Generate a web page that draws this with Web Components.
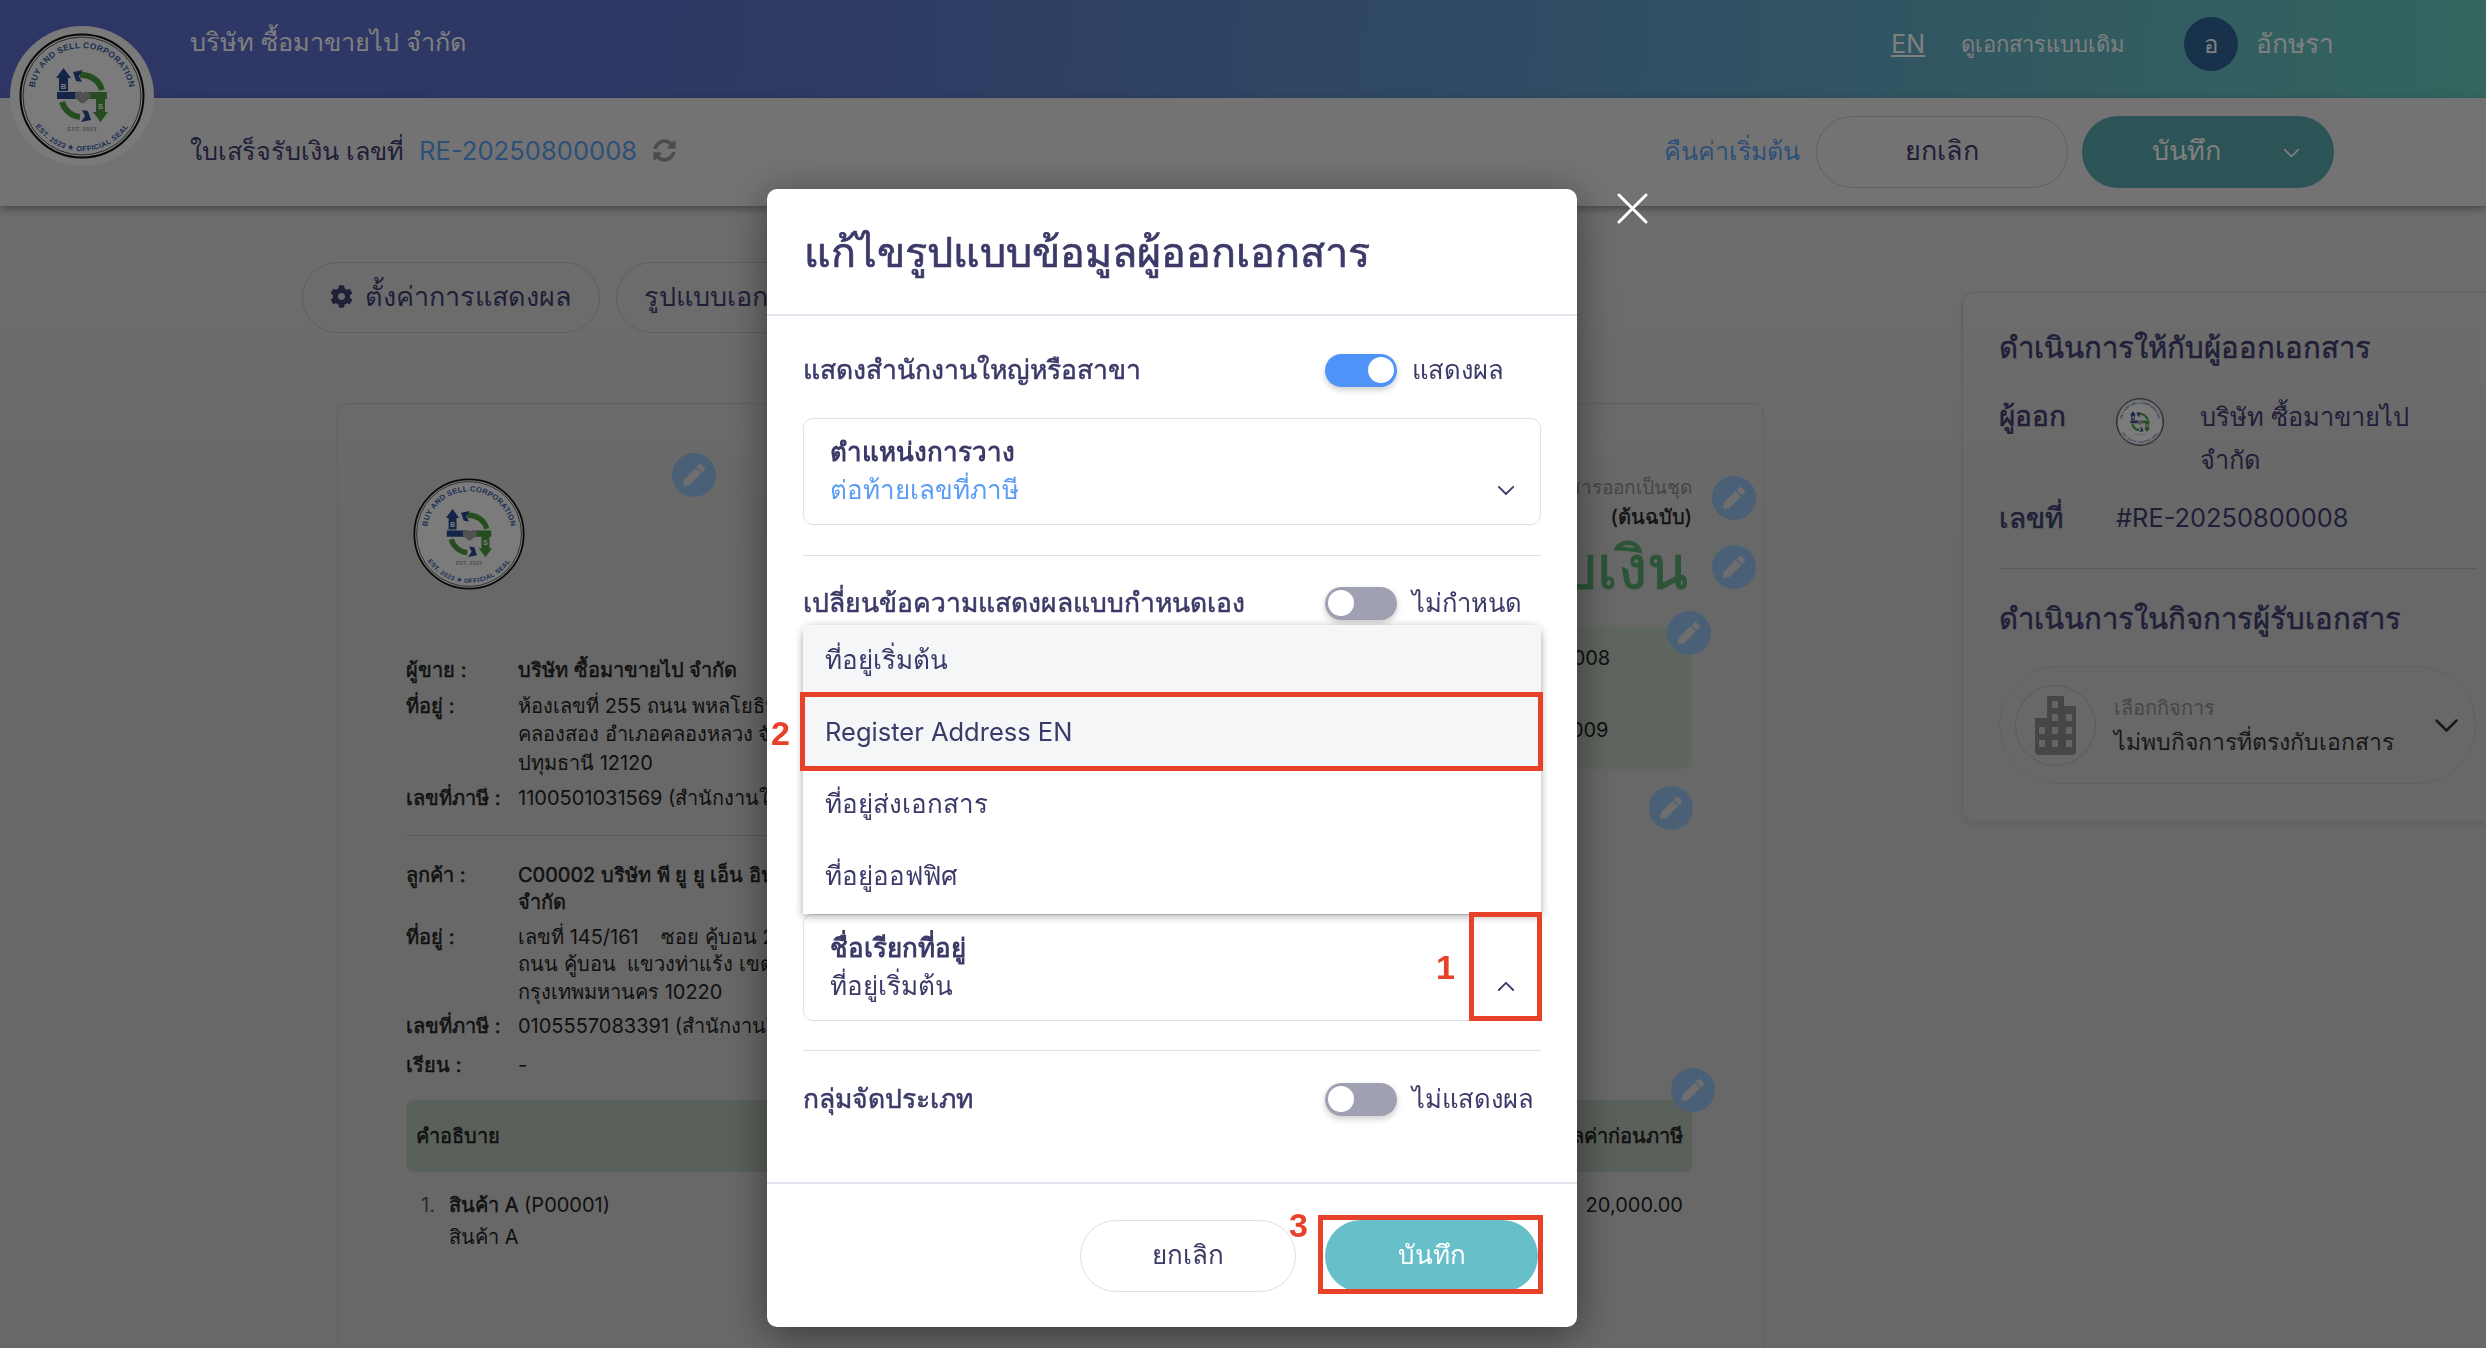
<!DOCTYPE html>
<html lang="th"><head><meta charset="utf-8"><title>แก้ไขรูปแบบข้อมูลผู้ออกเอกสาร</title>
<style>
html,body{margin:0;padding:0;width:2486px;height:1348px;overflow:hidden;background:#d2d2d2}
body{font-family:Inter,"Noto Sans","Open Sans",sans-serif;color:#2a2a2a}
</style></head><body>
<x-app></x-app>
<script>
function def(name,css,html){customElements.define(name,class extends HTMLElement{constructor(){super();this.attachShadow({mode:'open'}).innerHTML='<style>:host{display:block;box-sizing:border-box}*{box-sizing:border-box}'+css+'</style>'+html}})}
const ICON={
 gear:'<svg viewBox="0 0 512 512" width="23" height="23" fill="currentColor"><path d="M487.4 315.7l-42.6-24.6c4.3-23.2 4.3-47 0-70.2l42.6-24.6c4.9-2.8 7.1-8.6 5.5-14-11.1-35.6-30-67.8-54.7-94.6-3.8-4.1-10-5.1-14.8-2.3L380.8 110c-17.9-15.4-38.5-27.3-60.8-35.1V25.8c0-5.6-3.9-10.5-9.4-11.7-36.7-8.2-74.3-7.8-109.2 0-5.5 1.2-9.4 6.1-9.4 11.7V75c-22.2 7.9-42.8 19.8-60.8 35.1L88.7 85.5c-4.9-2.8-11-1.9-14.8 2.3-24.7 26.7-43.6 58.9-54.7 94.6-1.7 5.4.6 11.2 5.5 14L67.3 221c-4.3 23.2-4.3 47 0 70.2l-42.6 24.6c-4.9 2.8-7.1 8.6-5.5 14 11.1 35.6 30 67.8 54.7 94.6 3.8 4.1 10 5.1 14.8 2.3l42.6-24.6c17.9 15.4 38.5 27.3 60.8 35.1v49.2c0 5.6 3.9 10.5 9.4 11.7 36.7 8.2 74.3 7.8 109.2 0 5.5-1.2 9.4-6.1 9.4-11.7v-49.2c22.2-7.9 42.8-19.8 60.8-35.1l42.6 24.6c4.9 2.8 11 1.9 14.8-2.3 24.7-26.7 43.6-58.9 54.7-94.6 1.5-5.5-.7-11.3-5.6-14.1zM256 336c-44.1 0-80-35.9-80-80s35.9-80 80-80 80 35.9 80 80-35.9 80-80 80z"/></svg>',
 sync:'<svg viewBox="0 0 512 512" width="23" height="23" fill="currentColor"><path d="M370.72 133.28C339.458 104.008 298.888 87.962 255.848 88c-77.458.068-144.328 53.178-162.791 126.85-1.344 5.363-6.122 9.15-11.651 9.15H24.103c-7.498 0-13.194-6.807-11.807-14.176C33.933 94.924 134.813 8 256 8c66.448 0 126.791 26.136 171.315 68.685L463.03 40.97C478.149 25.851 504 36.559 504 57.941V192c0 13.255-10.745 24-24 24H345.941c-21.382 0-32.09-25.851-16.971-40.971l41.75-41.749zM32 296h134.059c21.382 0 32.09 25.851 16.971 40.971l-41.75 41.75c31.262 29.273 71.835 45.319 114.876 45.28 77.418-.07 144.315-53.144 162.787-126.849 1.344-5.363 6.122-9.15 11.651-9.15h57.304c7.498 0 13.194 6.807 11.807 14.176C478.067 417.076 377.187 504 256 504c-66.448 0-126.791-26.136-171.315-68.685L48.97 471.03C33.851 486.149 8 475.441 8 454.059V320c0-13.255 10.745-24 24-24z"/></svg>',
 down:s=>`<svg viewBox="0 0 20 12" width="${s}" height="${s*.6}" fill="none" stroke="currentColor" stroke-width="2" stroke-linecap="round" stroke-linejoin="round"><path d="M2 2l8 8 8-8"/></svg>`,
 up:s=>`<svg viewBox="0 0 20 12" width="${s}" height="${s*.6}" fill="none" stroke="currentColor" stroke-width="2" stroke-linecap="round" stroke-linejoin="round"><path d="M2 10l8-8 8 8"/></svg>`
};
/* seal logo: real text set on circular paths */
def('x-seal',`:host{display:block;width:var(--d,126px);height:var(--d,126px)}svg{display:block;width:100%;height:100%;font-family:"Liberation Sans",Arial,sans-serif}`,
`<svg viewBox="-63 -63 126 126">
<defs><path id="t" d="M-43.500 20.300A48 48 0 1 1 43.500 20.300"/><path id="b" d="M-54 14A56 56 0 0 0 54 14"/></defs>
<circle r="61.5" fill="#f6f6f6" stroke="#111" stroke-width="2"/><circle r="59" fill="none" stroke="#111" stroke-width=".7"/>
<text font-size="8.500" font-weight="700" fill="#3a5fa8" letter-spacing=".25"><textPath href="#t" startOffset="50%" text-anchor="middle">BUY AND SELL CORPORATION</textPath></text>
<text font-size="7.200" font-weight="700" fill="#3a5fa8" letter-spacing=".5"><textPath href="#b" startOffset="50%" text-anchor="middle">EST. 2023 ★ OFFICIAL SEAL</textPath></text>
<text y="35" text-anchor="middle" font-size="5.600" font-weight="700" fill="#9a9a9a" letter-spacing=".4">EST. 2023</text>
<g fill="none" stroke="#4d9a3e" stroke-width="6"><path d="M-2-21A21 21 0 0 1 20-6"/><path d="M-20 6A21 21 0 0 0 -2 21"/></g>
<path fill="#2a4a90" d="M-18.500-28L-11-18H-14V-5H-23V-18H-26zM-25-4H-4V3H-25zM-9-24L1-26-3-20 0-14-6-15zM9 24L-1 26 3 20 0 14 6 15z"/>
<path fill="#4d9a3e" d="M18.500 26L11 16H14V3H23V16H26zM4-4H25V3H4z"/>
<text x="-18.500" y="-7.500" text-anchor="middle" font-size="7.400" font-weight="700" fill="#fff">B</text>
<text x="18.500" y="12.500" text-anchor="middle" font-size="7.400" font-weight="700" fill="#fff">S</text>
<path fill="#a2a2a2" d="M-7-3Q-2-6 1-3 5-6 9-2L8 2 2 7Q-1 8-3 5L-7 2z"/></svg>`);
def('x-pencil',`:host{position:absolute;width:44px;height:44px;border-radius:50%;background:#94c0ee;display:flex;align-items:center;justify-content:center;color:#dcdcdc}`,
`<svg viewBox="0 0 512 512" width="22" height="22" fill="currentColor"><path d="M497.9 142.100l-46.100 46.100c-4.700 4.700-12.300 4.700-17 0l-111-111c-4.700-4.700-4.700-12.300 0-17l46.100-46.100c18.700-18.700 49.100-18.700 67.900 0l60.100 60.100c18.800 18.700 18.800 49.100 0 67.900zM284.200 99.800L21.600 362.400.4 483.900c-2.900 16.400 11.400 30.600 27.800 27.800l121.500-21.300 262.600-262.600c4.700-4.700 4.700-12.300 0-17l-111-111c-4.800-4.700-12.400-4.700-17.100 0z"/></svg>`);
def('x-header',`:host{height:98px;background:linear-gradient(94deg,#5c6ccc 0%,#5c72c8 30%,#5f98c8 62%,#66ccbe 100%);display:flex;align-items:center;padding:0 152px 10px 190px;color:#fff;font-size:25.300px}
.n{flex:1;margin-top:-4px}.r{display:flex;align-items:center}.en{text-decoration:underline;margin-right:36px;font-size:25px}.d{font-size:22px;margin-right:59px}.u{font-size:26.500px}
.av{width:54px;height:54px;border-radius:50%;background:#2e6494;display:flex;align-items:center;justify-content:center;margin-right:18px;font-size:24px}`,
`<div class="n">บริษัท ซื้อมาขายไป จำกัด</div><div class="r"><span class="en">EN</span><span class="d">ดูเอกสารแบบเดิม</span><span class="av">อ</span><span class="u">อักษรา</span></div>`);
def('x-toolbar',`:host{height:108px;background:#e6e6e6;display:flex;align-items:center;padding:0 152px 0 190px;font-size:25.200px;color:#3e3e70;box-shadow:0 3px 8px rgba(0,0,0,.35);position:relative;z-index:1}
.t{flex:1;display:flex;align-items:center;gap:15px;margin-top:-3px}.l{color:#5c9ff0;font-size:25.600px}.s{color:#999;display:flex;margin-left:1px}.re{color:#5c9ff0;margin-right:16px;font-size:25px;margin-top:-3px}
.b{width:252px;height:72px;border-radius:36px;display:flex;align-items:center;justify-content:center;font-size:27px;padding-bottom:3px}.c{border:1px solid #c3c3c3;color:#3e3e70;margin-right:14px}.v{background:#58a6ac;color:#fff;position:relative;padding-right:44px}.v svg{position:absolute;right:34px;top:32px;}`,
`<div class="t"><span>ใบเสร็จรับเงิน เลขที่</span><span class="l">RE-20250800008</span><span class="s">${ICON.sync}</span></div><span class="re">คืนค่าเริ่มต้น</span><div class="b c">ยกเลิก</div><div class="b v">บันทึก${ICON.down(17)}</div>`);
def('x-tabs',`:host{display:flex;gap:16px;margin:56px 0 0 302px;font-size:27px;color:#3e3e70}
.p{height:71px;border:1px solid #bdbdbd;border-radius:36px;display:flex;align-items:center;gap:12px;padding:0 27px 2px;white-space:nowrap}`,
`<div class="p">${ICON.gear}<span>ตั้งค่าการแสดงผล</span></div><div class="p">รูปแบบเอกสาร</div>`);
def('x-doc',`:host{position:relative;margin:70px 0 0 337px;width:1427px;height:1000px;border:1px solid #c0c0c0;border-radius:12px;padding:74px 71px 0 68px;font-size:20px;line-height:28.500px;color:#222;white-space:nowrap}
.top{display:flex;justify-content:space-between}.L{width:900px}.R{width:420px;margin-top:-4px;text-align:right}
x-seal{--d:112px;margin-left:7px}.rows{margin-top:66px;display:grid;grid-template-columns:112px 1fr;row-gap:7px}.cu{line-height:27.500px;margin-top:0}
b{font-weight:400;-webkit-text-stroke:.5px currentColor}hr{border:0;border-top:1px solid #b4b4b4;margin:22px 0 26px}.ex{margin-top:4px}.g{color:#8b8b8b;font-weight:400;font-size:19px}.o{-webkit-text-stroke:.4px currentColor}
.big{font-size:60px;line-height:72px;color:#5aa86e;-webkit-text-stroke:1px currentColor;margin-right:4px}
.box{background:#bfcbbf;border-radius:8px;height:142px;margin-top:24px;padding:17px 0 0 157px;text-align:left;display:flex;flex-direction:column;gap:43px}
.th{height:72px;background:#b4c0b4;border-radius:8px;margin-top:21px;display:flex;justify-content:space-between;align-items:center;padding:0 9px 0 10px}
.it{display:flex;justify-content:space-between;padding:17px 9px 0 15px;line-height:32px}.it .n{width:28px;color:#555}.it .m{flex:1}`,
`<div class="top"><div class="L"><x-seal></x-seal>
<div class="rows"><b>ผู้ขาย :</b><b>บริษัท ซื้อมาขายไป จำกัด</b><b>ที่อยู่ :</b><span>ห้องเลขที่ 255 ถนน พหลโยธิน ตำบล<br>คลองสอง อำเภอคลองหลวง จังหวัด<br>ปทุมธานี 12120</span><b>เลขที่ภาษี :</b><span>1100501031569 (สำนักงานใหญ่)</span></div>
<hr><div class="rows cu"><b>ลูกค้า :</b><b>C00002 บริษัท พี ยู ยู เอ็น อินเตอร์เนชั่นแนล<br>จำกัด</b><b>ที่อยู่ :</b><span>เลขที่ 145/161 &nbsp;&nbsp; ซอย คู้บอน 27 แยก 7<br>ถนน คู้บอน &nbsp;แขวงท่าแร้ง เขตบางเขน<br>กรุงเทพมหานคร 10220</span><b>เลขที่ภาษี :</b><span>0105557083391 (สำนักงานใหญ่)</span><b class="ex">เรียน :</b><span class="ex">-</span></div></div>
<div class="R"><div class="g">เอกสารออกเป็นชุด</div><div class="o">(ต้นฉบับ)</div><div class="big">ใบเสร็จรับเงิน</div>
<div class="box"><span>RE-20250800008</span><span style="margin-left:5px">IV-20250800009</span></div></div></div>
<div class="th"><b>คำอธิบาย</b><b>มูลค่าก่อนภาษี</b></div>
<div class="it"><span class="n">1.</span><span class="m"><b>สินค้า A</b> (P00001)<br>สินค้า A</span><span>20,000.00</span></div>
<x-pencil style="left:334px;top:49px"></x-pencil><x-pencil style="left:1374px;top:72px"></x-pencil><x-pencil style="left:1374px;top:141px"></x-pencil><x-pencil style="left:1329px;top:207px"></x-pencil><x-pencil style="left:1311px;top:382px"></x-pencil><x-pencil style="left:1333px;top:664px"></x-pencil>`);
def('x-side',`:host{width:530px;height:530px;margin:86px -10px 0 198px;flex:none;border:1px solid #c0c0c0;border-radius:12px 0 0 12px;padding:30px 15px 0 36px;font-size:25.400px;color:#3e3e70;box-shadow:0 2px 6px rgba(0,0,0,.08)}
h3{margin:0;font-size:29.300px;font-weight:400;-webkit-text-stroke:.5px currentColor;line-height:50px}.row{display:grid;grid-template-columns:117px 84px 1fr;margin-top:22px;line-height:43px}.row b,.no b{font-weight:400;font-size:28px;-webkit-text-stroke:.6px currentColor}
x-seal{--d:48px;margin-top:3px}.no{display:flex;margin-top:17px;line-height:40px}.no b{width:117px}
hr{border:0;border-top:1px solid #b4b4b4;margin:30px 0 25px}
.sel{margin-top:22px;height:118px;border:1px solid #c3c3c3;border-radius:59px;display:flex;align-items:center;padding:0 16px 0 15px;color:#333}
.ic{width:81px;height:81px;border:1px solid #b4b4b4;border-radius:50%;display:flex;align-items:center;justify-content:center;margin-right:18px}
.tx{flex:1;line-height:34px;font-size:23px}.sm{font-size:20px;color:#8d8d8d}`,
`<h3>ดำเนินการให้กับผู้ออกเอกสาร</h3><div class="row"><b>ผู้ออก</b><x-seal></x-seal><span>บริษัท ซื้อมาขายไป<br>จำกัด</span></div><div class="no"><b>เลขที่</b><span>#RE-20250800008</span></div><hr><h3>ดำเนินการในกิจการผู้รับเอกสาร</h3>
<div class="sel"><div class="ic"><svg width="41" height="59" viewBox="0 0 41 59"><path fill="#8c8c8c" d="M12 0H29V10H41V57L38 59H3L0 57V22H12z"/><g fill="#c9c9c9"><rect x="17" y="5" width="6" height="7"/><rect x="17" y="18" width="6" height="7"/><rect x="17" y="31" width="6" height="7"/><rect x="17" y="44" width="6" height="7"/><rect x="31" y="18" width="6" height="7"/><rect x="31" y="31" width="6" height="7"/><rect x="31" y="44" width="6" height="7"/><rect x="4" y="31" width="6" height="7"/><rect x="4" y="44" width="6" height="7"/></g></svg></div><div class="tx"><div class="sm">เลือกกิจการ</div><div>ไม่พบกิจการที่ตรงกับเอกสาร</div></div>${ICON.down(25)}</div>`);
def('x-toggle',`:host{display:flex;align-items:center;gap:15px;font-size:25.600px;color:#3b3a68;width:216px;-webkit-text-stroke:0}
.t{width:72px;height:33px;border-radius:17px;background:#9fa1b3;position:relative;flex:none;box-shadow:0 3px 6px rgba(0,0,0,.2)}.k{position:absolute;left:3px;top:3.500px;width:26px;height:26px;border-radius:50%;background:#fff}
:host([on]) .t{background:#4f92f8}:host([on]) .k{left:43px}`,`<div class="t"><div class="k"></div></div><span><slot></slot></span>`);
def('x-setrow',`:host{display:flex;align-items:center;justify-content:space-between;font-size:26.500px;color:#3b3a68}.l{-webkit-text-stroke:.5px currentColor}`,`<span class="l"><slot name="l"></slot></span><slot></slot>`);
def('x-select',`:host{position:relative;height:107px;border:1px solid #dfdfea;border-radius:10px;padding:14px 26px 0;font-size:26px;color:#3b3a68;line-height:38px}
.l{font-weight:600}.v{color:var(--v,#3b3a68)}.c{position:absolute;right:25px;top:66px;display:flex}::slotted([slot=c]){display:flex}`,`<div class="l"><slot name="l"></slot></div><div class="v"><slot></slot></div><div class="c"><slot name="c"></slot></div>`);
def('x-menu',`:host{position:absolute;left:36px;top:436px;width:738px;height:289px;background:#fff;border-radius:10px 10px 0 0;box-shadow:0 2px 8px rgba(0,0,0,.35);font-size:26px;color:#3b3a68;display:flex;flex-direction:column}
div{height:72.250px;display:flex;align-items:center;padding:0 0 4px 22px}.a{background:#f5f6f8}.e{font-size:25.500px}`,`<div class="a">ที่อยู่เริ่มต้น</div><div class="a e">Register Address EN</div><div>ที่อยู่ส่งเอกสาร</div><div>ที่อยู่ออฟฟิศ</div>`);
def('x-mark',`:host{position:absolute;border:5px solid #e8412a;pointer-events:none}`,``);
def('x-num',`:host{position:absolute;color:#e8412a;font:700 34px/40px "Liberation Sans",Arial,sans-serif}`,`<slot></slot>`);
def('x-modal',`:host{position:fixed;left:767px;top:189px;width:810px;height:1138px;background:#fff;border-radius:10px;box-shadow:0 8px 40px rgba(0,0,0,.45);color:#3b3a68;z-index:3}
h2{margin:0;height:127px;border-bottom:2px solid #e3e3ee;padding:35px 0 0 37px;font-size:41.300px;line-height:56px;font-weight:400;-webkit-text-stroke:.7px currentColor}
.b{padding:0 36px}.d{height:1px;background:#dfdfea;border:0;margin:0}
.f{position:absolute;left:0;right:0;top:993px;border-top:2px solid #e3e3ee;display:flex;gap:29px;justify-content:flex-end;padding:36px 39px 0}
.btn{height:72px;border-radius:36px;display:flex;align-items:center;justify-content:center;font-size:26px;padding-bottom:3px}.c{width:216px;border:1px solid #dfdfea}.s{width:213px;background:#67bfc9;color:#fff}
x-setrow{height:34px}`,
`<h2>แก้ไขรูปแบบข้อมูลผู้ออกเอกสาร</h2><div class="b">
<x-setrow style="margin-top:37px"><span slot="l">แสดงสำนักงานใหญ่หรือสาขา</span><x-toggle on>แสดงผล</x-toggle></x-setrow>
<x-select style="margin-top:31px;--v:#5b9cf5"><span slot="l">ตำแหน่งการวาง</span>ต่อท้ายเลขที่ภาษี<span slot="c">${ICON.down(18)}</span></x-select>
<hr class="d" style="margin-top:30px">
<x-setrow style="margin-top:30px"><span slot="l">เปลี่ยนข้อความแสดงผลแบบกำหนดเอง</span><x-toggle>ไม่กำหนด</x-toggle></x-setrow>
<x-select style="margin-top:294px"><span slot="l">ชื่อเรียกที่อยู่</span>ที่อยู่เริ่มต้น<span slot="c">${ICON.up(18)}</span></x-select>
<hr class="d" style="margin-top:29px">
<x-setrow style="margin-top:31px"><span slot="l">กลุ่มจัดประเภท</span><x-toggle>ไม่แสดงผล</x-toggle></x-setrow></div>
<x-menu></x-menu>
<div class="f"><div class="btn c">ยกเลิก</div><div class="btn s">บันทึก</div></div>
<x-mark style="left:33px;top:503px;width:743px;height:79px"></x-mark><x-mark style="left:702px;top:723px;width:73px;height:109px"></x-mark><x-mark style="left:551px;top:1026px;width:225px;height:79px"></x-mark>
<x-num style="left:4px;top:524px">2</x-num><x-num style="left:669px;top:758px">1</x-num><x-num style="left:522px;top:1016px">3</x-num>`);
def('x-app',`:host{width:2486px;height:1348px;position:relative;overflow:hidden}
.m{display:flex;height:1142px;background:linear-gradient(#dcdcdc,#d0d0d0 30%)}.l{width:1764px;flex:none}
.o{position:fixed;inset:0;background:rgba(0,0,0,.5);z-index:2}.logo{position:absolute;left:10px;top:26px;width:144px;height:140px;border-radius:50%;background:#f4f4f4;display:flex;align-items:center;justify-content:center;z-index:1}
.x{position:fixed;left:1617px;top:193px;z-index:3;display:flex}`,
`<x-header></x-header><x-toolbar></x-toolbar><div class="m"><div class="l"><x-tabs></x-tabs><x-doc></x-doc></div><x-side></x-side></div>
<div class="logo"><x-seal></x-seal></div><div class="o"></div><x-modal></x-modal>
<svg class="x" width="31" height="31" viewBox="0 0 31 31" fill="none" stroke="#fff" stroke-width="3" stroke-linecap="round"><path d="M2 2l27 27M29 2L2 29"/></svg>`);
</script></body></html>
